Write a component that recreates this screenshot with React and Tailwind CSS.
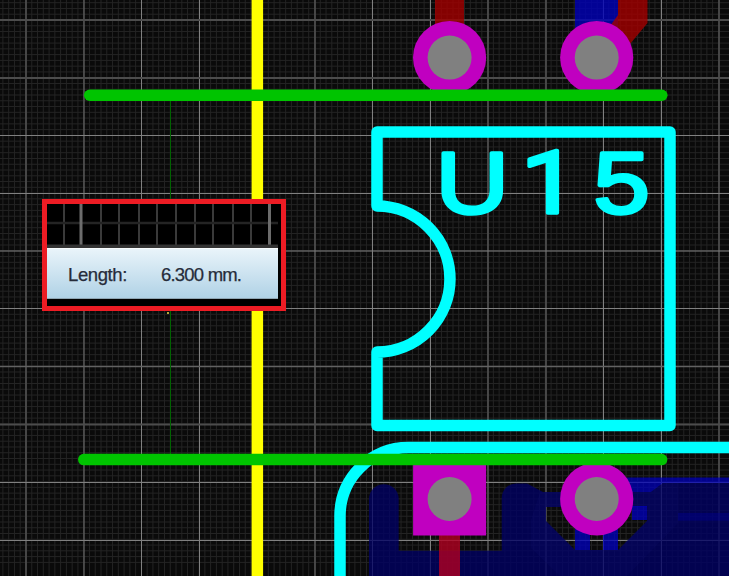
const vMajor = [
  [26, 'd'], [84, 'm'], [141.5, 'b'], [199.5, 'b'], [257, 'b'], [315, 'd'], [372.5, 'b'], [430.5, 'b'], [488, 'd'], [546, 'd'], [603.5, 'b'], [661.5, 'b'], [719, 'd'],
];
const hMajor = [
  [20, 'd'], [78, 'd'], [135.5, 'b'], [193.5, 'b'], [251, 'b'], [308.5, 'b'], [366.5, 'm'], [424.5, 'd'], [482.5, 'b'], [540.5, 'b'],
];
const majorStyle = { d: ['#4c4c4c', 1.8], m: ['#626262', 1.3], b: ['#808080', 1] };
const vMinor = Array.from({ length: 130 }, (_, i) => 26 - 57.7 + i * 5.77);
const hMinor = Array.from({ length: 105 }, (_, i) => 20 - 57.7 + i * 5.77);
const tipLines = [64, 101, 119, 139, 157, 176, 195, 213, 233, 251];

function Pad({ x, y, square }) {
  return (
    <g>
      {square ? (
        <rect x={x - 36.5} y={y - 36.5} width="73" height="73" fill="#c000c0" />
      ) : (
        <circle cx={x} cy={y} r="36.6" fill="#c000c0" />
      )}
      <circle cx={x} cy={y} r="22" fill="#808080" />
    </g>
  );
}

function Board() {
  const notch = 'M546,507 H647 V521 L618,550 H575 L546,521 Z';
  return (
    <svg className="block" width="729" height="576" viewBox="0 0 729 576">
      {/* grid */}
      {vMinor.map((x) => (
        <line key={`vm${x}`} x1={x} x2={x} y1="0" y2="576" stroke="#242424" strokeWidth="1" />
      ))}
      {hMinor.map((y) => (
        <line key={`hm${y}`} y1={y} y2={y} x1="0" x2="729" stroke="#242424" strokeWidth="1" />
      ))}
      {vMajor.map(([x, k]) => (
        <line key={`v${x}`} x1={x} x2={x} y1="0" y2="576" stroke={majorStyle[k][0]} strokeWidth={majorStyle[k][1]} />
      ))}
      {hMajor.map(([y, k]) => (
        <line key={`h${y}`} y1={y} y2={y} x1="0" x2="729" stroke={majorStyle[k][0]} strokeWidth={majorStyle[k][1]} />
      ))}

      {/* bottom copper */}
      <path
        fillRule="evenodd"
        fill="#000064"
        fillOpacity="0.78"
        d={`M369,576 V499 A14.7,14.7 0 0 1 398.7,499 V550.7 H501.7 V498 A14.5,14.5 0 0 1 516,483.5 H527 L543,492 H651 L663,483 H729 V576 Z ${notch}`}
      />
      <path
        fillRule="evenodd"
        fill="#14147a"
        fillOpacity="0.14"
        d={`M540,492 H651 L663,483 H678 V523 L627,576 H560 L531,548 V520 Z ${notch}`}
      />
      <path d="M627,477.5 H729 V483 H663 L651,492 H627 Z" fill="#0000b8" fillOpacity="0.75" />
      <rect x="678" y="513" width="51" height="7.7" fill="#0000a0" fillOpacity="0.35" />
      <rect x="632" y="506" width="15" height="14" fill="#0000b8" fillOpacity="0.78" />
      <rect x="575" y="515" width="15" height="35" fill="#0000b8" fillOpacity="0.78" />
      <rect x="603" y="515" width="15" height="35" fill="#0000b8" fillOpacity="0.78" />
      <rect x="575" y="0" width="43" height="40" fill="#0000b8" fillOpacity="0.8" />

      {/* red traces */}
      <rect x="435" y="0" width="29" height="30" fill="#a00000" fillOpacity="0.82" />
      <path d="M618,0 H647.5 V23 L630,44 H600 L611.5,24 L618,15 Z" fill="#a00000" fillOpacity="0.82" />
      <rect x="439" y="530" width="21" height="46" fill="#b00020" fillOpacity="0.8" />

      {/* keep-out track */}
      <line x1="170.5" x2="170.5" y1="95" y2="460" stroke="#006400" strokeWidth="1" />

      {/* pads */}
      <Pad x={449.6} y={57.6} />
      <Pad x={596.7} y={57.6} />
      <Pad x={449.6} y={499} square />
      <Pad x={596.7} y={499} />

      {/* silkscreen */}
      <path
        d="M377,206 V132 H670 V425.5 H377 V352 A73,73 0 0 0 377,206 Z"
        fill="none"
        stroke="#00ffff"
        strokeWidth="11.5"
        strokeLinejoin="round"
      />
      <path d="M340,576 V516 A68.5,68.5 0 0 1 408.5,447.5 H729" fill="none" stroke="#00ffff" strokeWidth="11.5" />
      <text
        transform="translate(0,213.4) scale(1.15,1)"
        fill="#00ffff"
        stroke="#00ffff"
        strokeWidth="3.6"
        strokeLinejoin="round"
        fontSize="88"
        style={{ fontFamily: '"Liberation Sans", Arial, sans-serif' }}
      >
        <tspan x="379">U</tspan>
        <tspan x="453" style={{ fontFamily: 'Roboto, Arial, sans-serif' }}>1</tspan>
        <tspan x="516">5</tspan>
      </text>

      {/* tracks */}
      <rect x="251.6" y="0" width="11.5" height="576" fill="#ffff00" />
      <line x1="89.7" x2="661.8" y1="95.3" y2="95.3" stroke="#00c400" strokeWidth="11.5" strokeLinecap="round" />
      <line x1="83.8" x2="661.6" y1="459.6" y2="459.6" stroke="#00c400" strokeWidth="11.5" strokeLinecap="round" />
      <rect x="167" y="312" width="2" height="2" fill="#b8a838" />
    </svg>
  );
}

function MeasureTip() {
  return (
    <div className="absolute left-[42px] top-[199px] flex h-[112px] w-[244px] flex-col border-[5px] border-[#ed1c24] bg-black">
      <svg className="block shrink-0 blur-[0.5px]" width="234" height="44" viewBox="47 204 234 44">
        <g stroke="#3a3a3a" strokeWidth="2">
          {tipLines.map((x) => (
            <line key={x} x1={x} x2={x} y1="204" y2="245" />
          ))}
          <line x1="47" x2="278" y1="223" y2="223" strokeWidth="2.5" stroke="#242424" />
        </g>
        <line x1="81" x2="81" y1="204" y2="245" stroke="#6c6c6c" strokeWidth="3" />
        <line x1="269.5" x2="269.5" y1="204" y2="245" stroke="#6c6c6c" strokeWidth="3" />
        <rect x="47" y="244.5" width="231" height="3.5" fill="#333333" />
      </svg>
      <div
        className="flex h-[51px] w-[231px] shrink-0 items-center border-t border-b border-t-[#f8fcfe] border-b-[#8fa6b4] bg-gradient-to-b from-[#e9f4fa] to-[#b0d2e6] pl-[21px] pt-[4px] text-[18.5px] leading-none text-[#262c3a] [-webkit-text-stroke:0.25px_#262c3a]"
        style={{ fontFamily: '"Liberation Sans", Arial, sans-serif' }}
      >
        <span className="w-[93px] tracking-[-0.4px]">Length:</span>
        <span className="tracking-[-0.8px]">6.300 mm.</span>
      </div>
    </div>
  );
}

export default function App() {
  return (
    <div className="relative h-[576px] w-[729px] overflow-hidden bg-[#0a0a0a]">
      <Board />
      <MeasureTip />
    </div>
  );
}
